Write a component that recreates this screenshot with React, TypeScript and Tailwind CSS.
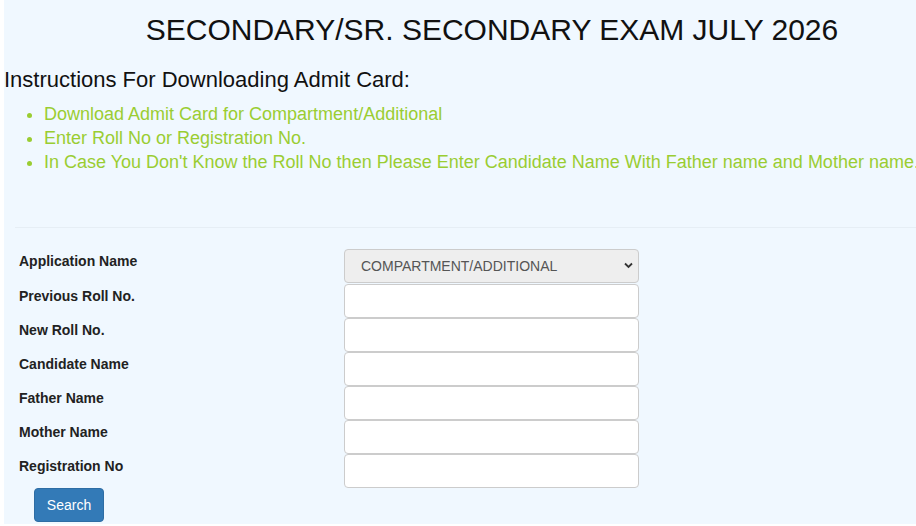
import React from "react";

const rows = [
  "Previous Roll No.",
  "New Roll No.",
  "Candidate Name",
  "Father Name",
  "Mother Name",
  "Registration No",
];

export default function App() {
  return (
    <div className="w-[916px] h-[526px] overflow-hidden bg-white" style={{ fontFamily: '"Liberation Sans", Arial, sans-serif' }}>
      <div className="ml-[4px] h-[524px] bg-[#f0f8ff] overflow-hidden">
        <h2 className="pl-[64px] pt-[13px] text-[30px] leading-[33px] text-center text-[#111]">
          SECONDARY/SR. SECONDARY EXAM JULY 2026
        </h2>
        <h3 className="mt-[21px] text-[22px] leading-[26px] text-[#111]">
          Instructions For Downloading Admit Card:
        </h3>
        <ul className="mt-[9px] pl-[40px] list-disc text-[18px] leading-[24px] text-[#9acd32] whitespace-nowrap">
          <li>Download Admit Card for Compartment/Additional</li>
          <li>Enter Roll No or Registration No.</li>
          <li>In Case You Don't Know the Roll No then Please Enter Candidate Name With Father name and Mother name.</li>
        </ul>
        <div className="ml-[11px] mt-[53px] border-t border-[#e6eef5]" />
        <div className="mt-[21px] pl-[15px]">
          <div className="flex h-[35px]">
            <div className="w-[325px] pt-[2px] text-[14px] leading-[20px] font-bold text-[#222]">Application Name</div>
            <div className="relative w-[295px] h-[34px]">
              <select className="appearance-none w-full h-full rounded-[4px] border border-[#ccc] bg-[#eeeeee] pl-[16px] text-[14px] text-[#555]">
                <option>COMPARTMENT/ADDITIONAL</option>
              </select>
              <svg className="absolute right-[6px] top-[13px] pointer-events-none" width="9" height="7" viewBox="0 0 9 7">
                <path d="M1 1.5 L4.5 5 L8 1.5" fill="none" stroke="#333" strokeWidth="1.8" />
              </svg>
            </div>
          </div>
          {rows.map((r) => (
            <div key={r} className="flex h-[34px]">
              <div className="w-[325px] pt-[2px] text-[14px] leading-[20px] font-bold text-[#222]">{r}</div>
              <input className="w-[295px] h-[34px] rounded-[4px] border border-[#ccc] bg-white" />
            </div>
          ))}
          <button className="ml-[15px] w-[70px] h-[34px] rounded-[4px] bg-[#337ab7] border border-[#2e6da4] text-white text-[14px]">
            Search
          </button>
        </div>
      </div>
    </div>
  );
}
